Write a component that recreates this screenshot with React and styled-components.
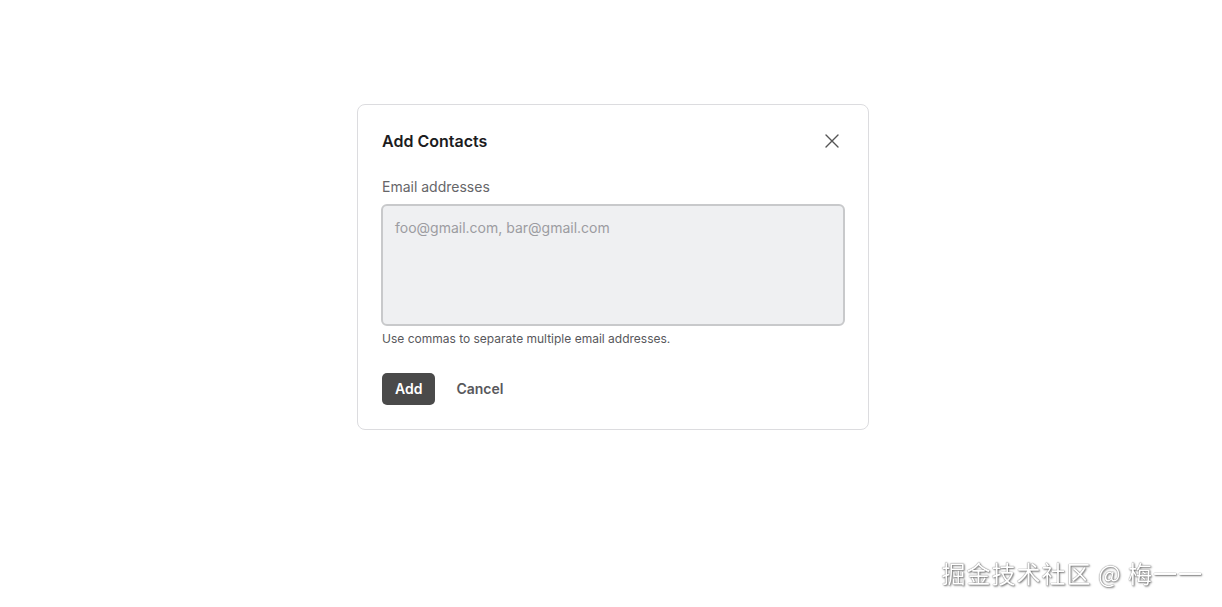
import React from 'react'
import styled, { createGlobalStyle } from 'styled-components'

const GlobalStyle = createGlobalStyle`
  * { box-sizing: border-box; }
  body {
    margin: 0;
    background: #ffffff;
    font-family: Inter, "Noto Sans", sans-serif;
  }
`

function App() {
  return (
    <>
      <GlobalStyle />
      <Page>
        <Dialog>
          <Header>
            <Title>Add Contacts</Title>
            <CloseButton aria-label="Close">
              <svg width="16" height="16" viewBox="0 0 16 16" fill="none">
                <path d="M2 2L14 14M14 2L2 14" stroke="#555" strokeWidth="1.4" strokeLinecap="round" />
              </svg>
            </CloseButton>
          </Header>
          <Label htmlFor="emails">Email addresses</Label>
          <TextArea id="emails" autoFocus placeholder="foo@gmail.com, bar@gmail.com" />
          <Hint>Use commas to separate multiple email addresses.</Hint>
          <Actions>
            <PrimaryButton>Add</PrimaryButton>
            <GhostButton>Cancel</GhostButton>
          </Actions>
        </Dialog>
      </Page>
      <Watermark>掘金技术社区 @ 梅一一</Watermark>
    </>
  )
}

const Page = styled.div`
  min-height: 100vh;
  display: flex;
  flex-direction: column;
  align-items: center;
  padding-top: 104px;
  padding-left: 4px;
`

const Dialog = styled.div`
  width: 512px;
  border: 1px solid #dcdcdf;
  border-radius: 8px;
  background: #fff;
  padding: 24px;
  display: flex;
  flex-direction: column;
`

const Header = styled.div`
  display: flex;
  align-items: center;
  justify-content: space-between;
  height: 24px;
  margin-bottom: 24px;
`

const Title = styled.h2`
  margin: 0;
  font-size: 16px;
  font-weight: 600;
  color: #1c1c1e;
  line-height: 24px;
`

const CloseButton = styled.button`
  border: none;
  background: none;
  padding: 0;
  width: 16px;
  height: 16px;
  margin-right: 4px;
  display: flex;
  cursor: pointer;
`

const Label = styled.label`
  font-size: 14px;
  line-height: 20px;
  color: #666669;
  margin-bottom: 7px;
`

const TextArea = styled.textarea`
  width: 464px;
  margin-left: -1px;
  height: 122px;
  resize: none;
  background: #eff0f2;
  border: 2px solid #c8c9cb;
  border-radius: 6px;
  padding: 12px 12px 10px;
  font-family: Inter, "Noto Sans", sans-serif;
  font-size: 14px;
  line-height: 20px;
  color: #333;
  caret-color: #222;
  outline: none;

  &::placeholder {
    color: #9c9ca1;
  }
`

const Hint = styled.p`
  margin: 5px 0 0;
  font-size: 12px;
  line-height: 16px;
  color: #58585c;
`

const Actions = styled.div`
  display: flex;
  align-items: center;
  gap: 5px;
  margin-top: 26px;
`

const PrimaryButton = styled.button`
  height: 32px;
  padding: 0 13px 2px;
  border: none;
  border-radius: 5px;
  background: #4a4a4a;
  color: #fff;
  font-family: Inter, "Noto Sans", sans-serif;
  font-size: 14px;
  font-weight: 600;
  cursor: pointer;
`

const GhostButton = styled.button`
  height: 32px;
  padding: 0 16px 2px;
  border: none;
  background: none;
  color: #58585c;
  font-family: Inter, "Noto Sans", sans-serif;
  font-size: 14px;
  font-weight: 600;
  cursor: pointer;
`

const Watermark = styled.div`
  position: fixed;
  right: 19px;
  bottom: 17px;
  font-family: "Noto Sans CJK SC", sans-serif;
  font-size: 24px;
  color: #fff;
  text-shadow: 0 0 1px #444, 1px 1px 2px #777;
  letter-spacing: 1px;
`

export default App
